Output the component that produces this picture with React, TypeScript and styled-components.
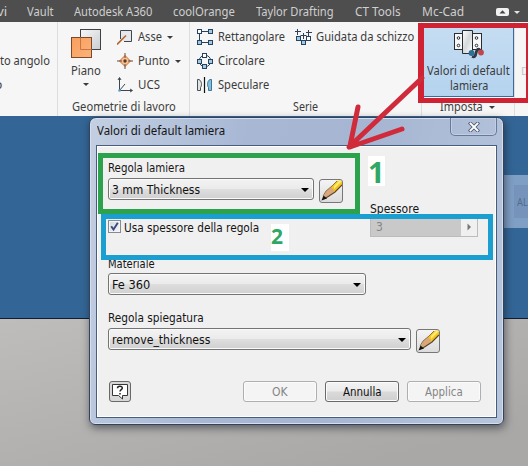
import React, { useLayoutEffect, useRef, useState } from "react";
import styled, { createGlobalStyle } from "styled-components";

const GlobalStyle = createGlobalStyle`
  * { box-sizing: border-box; }
  body { margin: 0; overflow: hidden; }
`;

const ribbonFont = `"Noto Sans", "Open Sans", sans-serif`;
const dialogFont = `"DejaVu Sans Condensed", "DejaVu Sans", sans-serif`;

/* ---------- text fitted to a fixed advance width ---------- */

const FitBox = styled.span<{ $w: number }>`
  display: block;
  flex: none;
  width: ${(p) => p.$w}px;
  white-space: nowrap;
`;
const FitInner = styled.span`
  display: inline-block;
  transform-origin: 0 50%;
`;

function Fit({ w, children }: { w: number; children: string }) {
  const ref = useRef<HTMLSpanElement>(null);
  const [scale, setScale] = useState(1);
  useLayoutEffect(() => {
    if (ref.current) setScale(w / ref.current.offsetWidth);
  }, [w, children]);
  return (
    <FitBox $w={w}>
      <FitInner ref={ref} style={{ transform: `scaleX(${scale})` }}>{children}</FitInner>
    </FitBox>
  );
}

/* ---------- application window ---------- */

const Screen = styled.div`
  position: relative;
  display: flex;
  flex-direction: column;
  width: 528px;
  height: 466px;
  overflow: hidden;
`;

const MenuBar = styled.nav`
  display: flex;
  align-items: center;
  flex: none;
  height: 22px;
  padding-top: 2px;
  background: #4e4e4e;
  color: #cfcfcf;
  font: 12px/20px ${ribbonFont};
`;
const MenuItem = styled.span<{ $gap: number }>`
  display: block;
  margin-right: ${(p) => p.$gap}px;
  &:first-child { margin-left: -3px; }
`;

const Ribbon = styled.div`
  display: flex;
  flex: none;
  height: 94px;
  background: #f6f6f6;
  color: #3c3c3c;
  font: 12px/24px ${ribbonFont};
`;
const Panel = styled.section<{ $w: number; $pad?: number }>`
  display: flex;
  flex-direction: column;
  flex: none;
  width: ${(p) => p.$w}px;
  padding-left: ${(p) => p.$pad ?? 0}px;
  border-right: 1px solid #dcdde0;
`;
const PanelBody = styled.div`
  display: flex;
  height: 76px;
  padding-top: 3px;
`;
const PanelTitle = styled.div<{ $indent: number }>`
  display: flex;
  align-items: center;
  gap: 6px;
  height: 18px;
  padding-left: ${(p) => p.$indent}px;
  line-height: 18px;
`;
const Column = styled.div<{ $w?: number }>`
  display: flex;
  flex-direction: column;
  flex: none;
  width: ${(p) => (p.$w ? `${p.$w}px` : "auto")};
`;
const Row = styled.div<{ $gap?: number }>`
  display: flex;
  align-items: center;
  gap: ${(p) => p.$gap ?? 5}px;
  height: 24px;
`;
const CutRow = styled(Row)`
  margin-left: -5px;
`;
const LargeButton = styled.div`
  display: flex;
  flex-direction: column;
  align-items: center;
  width: 30px;
  margin: 3px 16px 0 0;
  line-height: 25px;
`;
const Caret = styled.i<{ $s?: number; $c?: string }>`
  flex: none;
  width: 0;
  height: 0;
  border: ${(p) => p.$s ?? 3}px solid transparent;
  border-top-color: ${(p) => p.$c ?? "#3c3c3c"};
  border-bottom: 0;
`;
const ActiveButton = styled.div`
  display: flex;
  flex-direction: column;
  align-items: center;
  width: 91px;
  height: 72px;
  padding-top: 3px;
  border: 1px solid #3d6a96;
  background: linear-gradient(#c5ddf2, #b5d3ef);
  line-height: 15px;
`;
const ButtonCaption = styled.div`
  display: flex;
  flex-direction: column;
  align-items: center;
  margin-top: 4px;
`;
const Faded = styled.span`
  padding: 39px 0 0 6px;
  line-height: 20px;
  font-size: 11px;
  color: #c9c4c4;
`;

const Viewport = styled.main`
  display: flex;
  flex: 1;
  flex-direction: column;
`;
const Sky = styled.div`
  display: flex;
  justify-content: flex-end;
  height: 203px;
  padding-top: 59px;
  border-bottom: 1px solid #101c30;
  background: #336696;
`;
const Ground = styled.div`
  flex: 1;
  background: linear-gradient(165deg, #bfbdbb, #a9a8a7 85%);
`;
const NavCube = styled.div`
  width: 26px;
  height: 53px;
  padding: 10px 0 10px 12px;
  background: #7f9fc5;
`;
const CubeFace = styled.div`
  height: 33px;
  padding-left: 3px;
  overflow: hidden;
  background: #7694bb;
  color: #536d8e;
  font: 11px/33px ${ribbonFont};
`;

/* ---------- dialog ---------- */

const Dialog = styled.div`
  position: absolute;
  left: 89px;
  top: 117px;
  width: 415px;
  height: 308px;
  padding: 0 6px 6px;
  border: 1px solid #34435c;
  border-radius: 7px 7px 6px 6px;
  background: linear-gradient(100deg, #c3cfe2 0%, #a7b7d4 35%, #a5b5d2 60%, #b8c6dc 100%);
  box-shadow: inset 0 0 0 1px #d5deec, 1px 3px 8px rgba(20, 20, 30, 0.55);
  color: #151515;
  font: 12px/16px ${dialogFont};
`;
const TitleBar = styled.header`
  display: flex;
  justify-content: space-between;
  height: 27px;
  padding-left: 1px;
  font: 12px/26px ${ribbonFont};
`;
const CloseButton = styled.span`
  display: flex;
  align-items: center;
  justify-content: center;
  width: 47px;
  height: 18px;
  border: 1px solid #66799b;
  border-top: 0;
  border-radius: 0 0 5px 5px;
  box-shadow: inset 0 0 0 1px #c2cee1;
`;
const Client = styled.div`
  display: flex;
  flex-direction: column;
  height: 273px;
  padding: 14px 15px 0 11px;
  border: 1px solid #475d7e;
  background: #f0f0f0;
  box-shadow: inset 0 0 0 1px #ffffff;
`;
const Line = styled.div<{ $h: number; $mt?: number }>`
  display: flex;
  flex: none;
  align-items: flex-start;
  height: ${(p) => p.$h}px;
  margin-top: ${(p) => p.$mt ?? 0}px;
`;
const Combo = styled.div<{ $w: number }>`
  display: flex;
  flex: none;
  align-items: center;
  justify-content: space-between;
  width: ${(p) => p.$w}px;
  height: 22px;
  padding: 1px 4px 0 3px;
  border: 1px solid #747474;
  border-radius: 3px;
  background: linear-gradient(#f3f3f3 0, #ebebeb 48%, #dedede 52%, #d0d0d0);
  box-shadow: inset 0 0 0 1px #fafafa;
  color: #101010;
`;
const ToolButton = styled.span`
  display: block;
  flex: none;
  width: 24px;
  height: 24px;
  margin: 1px 0 0 5px;
  border: 1px solid #777;
  border-radius: 3px;
  background: linear-gradient(#f4f4f4, #dcdcdc);
`;
const CheckBox = styled.span`
  display: block;
  flex: none;
  width: 13px;
  height: 13px;
  margin: 0 3px 0 0;
  border: 1px solid #868b91;
  background: linear-gradient(135deg, #d3d9df, #f5f6f8);
  box-shadow: inset 0 0 0 1px #f4f4f4;
`;
const CheckText = styled.span`
  flex: 1;
`;
const Spinner = styled.span`
  display: flex;
  width: 108px;
  height: 20px;
  margin: -3px 3px 0 0;
  border: 1px solid #bcbcbc;
  background: #c9c9c9;
  color: #858585;
  line-height: 19px;
`;
const SpinnerValue = styled.span`
  flex: 1;
  padding-left: 5px;
`;
const SpinnerArrow = styled.span`
  display: flex;
  align-items: center;
  justify-content: center;
  width: 16px;
  background: #f0f0f0;
`;
const PushButton = styled.span<{ $enabled?: boolean }>`
  display: flex;
  justify-content: center;
  width: 74px;
  height: 21px;
  border: 1px solid ${(p) => (p.$enabled ? "#696969" : "#acb0b3")};
  border-radius: 3px;
  background: ${(p) => (p.$enabled ? "linear-gradient(#f3f3f3 0, #ebebeb 48%, #dadada 52%, #cfcfcf)" : "#f4f4f4")};
  box-shadow: inset 0 0 0 1px #fbfbfb;
  color: ${(p) => (p.$enabled ? "#101010" : "#858585")};
  line-height: 20px;
`;
const HelpButton = styled.span`
  display: flex;
  align-items: center;
  justify-content: center;
  width: 22px;
  height: 21px;
  margin: 0 auto 0 1px;
  border: 1px solid #696969;
  border-radius: 3px;
  background: #d8d8d8;
`;
const Footer = styled.footer`
  display: flex;
  gap: 8px;
  margin-top: 31px;
`;

/* ---------- annotations lying over the window ---------- */

const Marker = styled.div<{ $x: number; $y: number; $w: number; $h: number; $t: string; $c: string }>`
  position: absolute;
  left: ${(p) => p.$x}px;
  top: ${(p) => p.$y}px;
  width: ${(p) => p.$w}px;
  height: ${(p) => p.$h}px;
  border: solid ${(p) => p.$c};
  border-width: ${(p) => p.$t};
`;
const Step = styled.div<{ $x: number; $y: number; $w: number; $h: number; $size: number; $lh: number }>`
  position: absolute;
  left: ${(p) => p.$x}px;
  top: ${(p) => p.$y}px;
  width: ${(p) => p.$w}px;
  height: ${(p) => p.$h}px;
  background: #fff;
  color: #2fa866;
  font: bold ${(p) => p.$size}px/${(p) => p.$lh}px "Noto Sans", "Open Sans", sans-serif;
`;
const ArrowLayer = styled.svg`
  position: absolute;
  left: 340px;
  top: 70px;
`;

/* ---------- icons ---------- */

const PlaneIcon = () => (
  <svg width="30" height="30" viewBox="0 0 30 30">
    <defs>
      <linearGradient id="pg" x1="0" y1="0" x2="1" y2="1"><stop offset="0" stopColor="#f7f7f7" /><stop offset="1" stopColor="#c9ced1" /></linearGradient>
      <linearGradient id="po" x1="0" y1="0" x2="1" y2="1"><stop offset="0" stopColor="#f99f5c" /><stop offset="1" stopColor="#fbb27c" /></linearGradient>
    </defs>
    <rect x="9.5" y="1.5" width="20" height="20" fill="url(#pg)" stroke="#3f4144" />
    <rect x=".5" y="9.5" width="20" height="20" fill="url(#po)" stroke="#7a4a2a" />
    <path d="M9.500 9.500V21.500H20.500" fill="none" stroke="#c77643" />
  </svg>
);
const AxisIcon = () => (
  <svg width="16" height="16" viewBox="0 0 16 16">
    <path d="M3.500 10V1.500H14.500V12.500H7" fill="#e5e8ea" stroke="#3f4850" />
    <path d="M0 15.500L9 6.500" stroke="#b5652e" strokeWidth="1.600" />
  </svg>
);
const PointIcon = () => (
  <svg width="16" height="16" viewBox="0 0 16 16">
    <path d="M8 2.500L13.500 8L8 13.500L2.500 8Z" fill="#fbc08f" stroke="#c27038" />
    <path d="M8 0V5M8 11V16M0 8H5M11 8H16" stroke="#6f4a35" />
    <circle cx="8" cy="8" r="1.700" fill="#5b3a2a" />
  </svg>
);
const UcsIcon = () => (
  <svg width="16" height="16" viewBox="0 0 16 16">
    <path d="M2.500 1V13.500H15M2.500 13.500L8 7" fill="none" stroke="#3c4650" />
    <path d="M1 3L2.500 .500L4 3M13 12L15.500 13.500L13 15" fill="none" stroke="#3c4650" />
    <circle cx="2.500" cy="13.500" r="1.300" fill="#5aa0c8" />
  </svg>
);
const RectPatternIcon = () => (
  <svg width="16" height="16" viewBox="0 0 16 16" stroke="#29435e">
    <path d="M5 2.500H11M5 13.500H11M2.500 5V11" fill="none" />
    <rect x=".5" y=".5" width="4" height="4" fill="#fff" />
    <rect x="11.500" y=".5" width="4" height="4" fill="#9fcbe4" />
    <rect x=".5" y="11.500" width="4" height="4" fill="#9fcbe4" />
    <rect x="11.500" y="11.500" width="4" height="4" fill="#9fcbe4" />
  </svg>
);
const CircPatternIcon = () => (
  <svg width="16" height="16" viewBox="0 0 16 16" stroke="#29435e">
    <circle cx="8" cy="8" r="5.800" fill="none" />
    <rect x="5.500" y=".5" width="4" height="4" fill="#fff" />
    <rect x=".5" y="6.500" width="4" height="4" fill="#9fcbe4" />
    <rect x="11.500" y="6.500" width="4" height="4" fill="#9fcbe4" />
    <rect x="5.500" y="11.500" width="4" height="4" fill="#9fcbe4" />
  </svg>
);
const MirrorIcon = () => (
  <svg width="16" height="16" viewBox="0 0 16 16">
    <path d="M.500 2.500H2C5 4 5 9 3.500 10.500V13.500H.500Z" fill="#dfe3e6" stroke="#4a4f54" />
    <path d="M14.500 2.500H13C10 4 10 9 11.500 10.500V13.500H14.500Z" fill="#7fc0e0" stroke="#3f7698" />
    <path d="M7.500 0V16" stroke="#111" strokeWidth="1.200" />
  </svg>
);
const SketchPatternIcon = () => (
  <svg width="17" height="16" viewBox="0 0 17 16" stroke="#29435e" fill="none">
    <path d="M2.500 0V6M0 2.500H6M8.500 4V10M5.500 6.500H11.500M13.500 1V7M11 3.500H17" />
    <rect x="1.500" y="7.500" width="4" height="4" fill="#9fcbe4" />
    <rect x="6.500" y="11.500" width="4" height="4" fill="#9fcbe4" />
    <rect x="11.500" y="7.500" width="4" height="4" fill="#fff" />
  </svg>
);
const SheetMetalIcon = () => (
  <svg width="32" height="30" viewBox="0 0 32 30">
    <defs><linearGradient id="sm" x1="0" y1="0" x2="1" y2="1"><stop offset="0" stopColor="#fff" /><stop offset=".5" stopColor="#d5d9dc" /><stop offset="1" stopColor="#fff" /></linearGradient></defs>
    <rect x="1.500" y="4.500" width="27" height="16" fill="#f7f8f9" stroke="#292d31" />
    <path d="M9.500 1.500H19.500V24.500H9.500Z" fill="url(#sm)" stroke="#292d31" />
    <g fill="#fff" stroke="#292d31"><circle cx="5.500" cy="9" r="1.300" /><circle cx="5.500" cy="16.500" r="1.300" /><circle cx="23.500" cy="9" r="1.300" /><circle cx="23.500" cy="16.500" r="1.300" /></g>
    <path d="M19 27.500C25 30 21 18.500 27 20.500" fill="none" stroke="#343842" strokeWidth="2.800" />
    <circle cx="18.500" cy="24" r="2.900" fill="#2f7094" />
    <circle cx="28" cy="23.500" r="2.900" fill="#bd4650" />
  </svg>
);
const Pencil = () => (
  <svg width="22" height="22" viewBox="0 0 22 22" display="block">
    <path d="M2 20L6 11L10 15Z" fill="#d9a578" />
    <path d="M6 11L12 6L16 10L9 16Z" fill="#dba679" />
    <path d="M11 7L17 1Q20 0 22 1V5L15 12Z" fill="#f4c51c" />
    <path d="M14 6L19 1H22L14 9Z" fill="#ffec70" />
    <path d="M22 5L15 12L9 16L5 18.500" fill="none" stroke="#5b4428" strokeWidth="1.200" />
    <path d="M3 16L6 11L12 6L17 1" fill="none" stroke="#775b39" strokeWidth=".8" />
    <path d="M1.500 20.500L3.500 15.500L7 18.500Z" fill="#111" />
  </svg>
);
const HelpIcon = () => (
  <svg width="18" height="17" viewBox="0 0 18 17">
    <path d="M1.500 1.500H16.500V12.500H11.500V16L7.500 12.500H1.500Z" fill="#fff" stroke="#363636" />
    <path d="M6.500 5.200C6.500 2.500 11.300 2.500 11.300 5C11.300 6.800 9 6.500 9 8.600M9 10V11.500" fill="none" stroke="#222" strokeWidth="1.500" />
  </svg>
);
const CloseIcon = () => (
  <svg width="12" height="10" viewBox="0 0 12 10">
    <path d="M2.500 1.500L9.500 8.500M9.500 1.500L2.500 8.500" stroke="#4f5d75" strokeWidth="3.600" strokeLinecap="square" />
    <path d="M2.500 1.500L9.500 8.500M9.500 1.500L2.500 8.500" stroke="#fff" strokeWidth="1.900" strokeLinecap="square" />
  </svg>
);
const CollapseIcon = () => (
  <svg width="13" height="8" viewBox="0 0 13 8">
    <rect width="13" height="8" rx="2" fill="#f1f1f1" />
    <path d="M3.500 5.500L6.500 2.300L9.500 5.500Z" fill="#444" />
  </svg>
);
const CheckMark = () => (
  <svg width="11" height="11" viewBox="0 0 11 11" display="block">
    <path d="M2.200 5.200L4.500 8.500L8.800 1.700" fill="none" stroke="#3b4b80" strokeWidth="1.900" />
  </svg>
);

const menu: [string, number, number][] = [
  ["vi", 10, 20],
  ["Vault", 27, 20],
  ["Autodesk A360", 78, 21],
  ["coolOrange", 62, 21],
  ["Taylor Drafting", 78, 21],
  ["CT Tools", 46, 21],
  ["Mc-Cad", 42, 32],
];

export default function App() {
  return (
    <Screen>
      <GlobalStyle />
      <MenuBar>
        {menu.map(([label, w, gap]) => (
          <MenuItem key={label} $gap={gap}><Fit w={w}>{label}</Fit></MenuItem>
        ))}
        <CollapseIcon />
        <MenuItem $gap={5} />
        <Caret $s={3} $c="#e4e4e4" />
      </MenuBar>

      <Ribbon>
        <Panel $w={58}>
          <PanelBody>
            <Column>
              <Row />
              <Row><Fit w={50}>to angolo</Fit></Row>
              <CutRow><Fit w={7}>o</Fit></CutRow>
            </Column>
          </PanelBody>
        </Panel>
        <Panel $w={132} $pad={13}>
          <PanelBody>
            <LargeButton>
              <PlaneIcon />
              <Fit w={30}>Piano</Fit>
              <Caret />
            </LargeButton>
            <Column>
              <Row><AxisIcon /><Fit w={24}>Asse</Fit><Caret /></Row>
              <Row><PointIcon /><Fit w={32}>Punto</Fit><Caret /></Row>
              <Row><UcsIcon /><Fit w={22}>UCS</Fit></Row>
            </Column>
          </PanelBody>
          <PanelTitle $indent={1}><Fit w={104}>Geometrie di lavoro</Fit></PanelTitle>
        </Panel>
        <Panel $w={232} $pad={7}>
          <PanelBody>
            <Column $w={98}>
              <Row><RectPatternIcon /><Fit w={67}>Rettangolare</Fit></Row>
              <Row><CircPatternIcon /><Fit w={47}>Circolare</Fit></Row>
              <Row><MirrorIcon /><Fit w={51}>Speculare</Fit></Row>
            </Column>
            <Column>
              <Row $gap={4}><SketchPatternIcon /><Fit w={98}>Guidata da schizzo</Fit></Row>
            </Column>
          </PanelBody>
          <PanelTitle $indent={96}><Fit w={25}>Serie</Fit></PanelTitle>
        </Panel>
        <Panel $w={93} $pad={1}>
          <PanelBody>
            <ActiveButton>
              <SheetMetalIcon />
              <ButtonCaption>
                <Fit w={83}>Valori di default</Fit>
                <Fit w={38}>lamiera</Fit>
              </ButtonCaption>
            </ActiveButton>
          </PanelBody>
          <PanelTitle $indent={17}><Fit w={43}>Imposta</Fit><Caret $s={3.5} /></PanelTitle>
        </Panel>
        <Faded>D</Faded>
      </Ribbon>

      <Viewport>
        <Sky><NavCube><CubeFace><Fit w={11}>AL</Fit></CubeFace></NavCube></Sky>
        <Ground />
      </Viewport>

      <Dialog>
        <TitleBar>
          <Fit w={128}>Valori di default lamiera</Fit>
          <CloseButton><CloseIcon /></CloseButton>
        </TitleBar>
        <Client>
          <Line $h={18}><Fit w={77}>Regola lamiera</Fit></Line>
          <Line $h={24}>
            <Combo $w={206}><Fit w={88}>3 mm Thickness</Fit><Caret $s={4} $c="#000" /></Combo>
            <ToolButton><Pencil /></ToolButton>
          </Line>
          <Line $h={16} $mt={-1}><Column $w={262} /><Fit w={49}>Spessore</Fit></Line>
          <Line $h={16} $mt={3}>
            <CheckBox><CheckMark /></CheckBox>
            <CheckText><Fit w={135}>Usa spessore della regola</Fit></CheckText>
            <Spinner>
              <SpinnerValue>3</SpinnerValue>
              <SpinnerArrow>
                <svg width="5" height="8" viewBox="0 0 5 8"><path d="M.5 .5L4 4L.5 7.500Z" fill="#777" /></svg>
              </SpinnerArrow>
            </Spinner>
          </Line>
          <Line $h={17} $mt={20}><Fit w={47}>Materiale</Fit></Line>
          <Line $h={22}><Combo $w={258}><Fit w={38}>Fe 360</Fit><Caret $s={4} $c="#000" /></Combo></Line>
          <Line $h={18} $mt={15}><Fit w={96}>Regola spiegatura</Fit></Line>
          <Line $h={22}>
            <Combo $w={303}><Fit w={98}>remove_thickness</Fit><Caret $s={4} $c="#000" /></Combo>
            <ToolButton><Pencil /></ToolButton>
          </Line>
          <Footer>
            <HelpButton><HelpIcon /></HelpButton>
            <PushButton><Fit w={16}>OK</Fit></PushButton>
            <PushButton $enabled><Fit w={39}>Annulla</Fit></PushButton>
            <PushButton><Fit w={38}>Applica</Fit></PushButton>
          </Footer>
        </Client>
      </Dialog>

      <Marker $x={98} $y={153} $w={262} $h={61} $t="5px" $c="#2da24d" />
      <Marker $x={101} $y={214} $w={392} $h={46} $t="5px" $c="#1a9fd0" />
      <Marker $x={418} $y={23} $w={115} $h={80} $t="5px 7px 5px 6px" $c="#cf2333" />
      <Step $x={368} $y={156} $w={17} $h={30} $size={29} $lh={32}>1</Step>
      <Step $x={271} $y={224} $w={18} $h={27} $size={21} $lh={24}>2</Step>
      <ArrowLayer width="90" height="84" viewBox="0 0 90 84" fill="none" stroke="#cf2b3a" strokeWidth="5" strokeLinecap="round">
        <path d="M82 8L9 77M18 37L10 76M62 59L10 77" />
      </ArrowLayer>
    </Screen>
  );
}
